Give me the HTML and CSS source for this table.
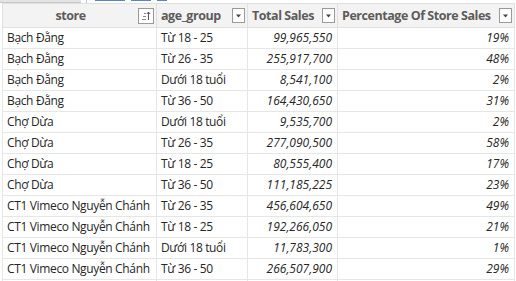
FILE: index.html
```html
<!DOCTYPE html>
<html>
<head>
<meta charset="utf-8">
<link rel="stylesheet" href="styles.css">
</head>
<body>
<div class="topstrip">
  <div class="tabbar"></div>
  <div class="tablink"><span class="frag"></span><span class="frag f2"></span><span class="frag f3"></span></div>
</div>
<table class="grid">
  <colgroup>
    <col class="c1"><col class="c2"><col class="c3"><col class="c4">
  </colgroup>
  <thead>
    <tr>
      <th class="center"><span class="hl">store</span><span class="ico sort"><svg width="16" height="16" viewBox="0 0 16 16"><rect x="0.5" y="0.5" width="15" height="15" fill="#fff" stroke="#9a9a9a"/><path d="M6 5.5h2M5 8.5h3M4 11.5h4" stroke="#8a8a8a" stroke-width="1"/><path d="M10.5 12V4M8.8 6l1.7-2 1.7 2" stroke="#555" fill="none" stroke-width="1"/></svg></span></th>
      <th><span class="hl">age_group</span><span class="ico dd"><svg width="13" height="15" viewBox="0 0 13 15"><rect x="0.5" y="0.5" width="12" height="14" fill="#fff" stroke="#9a9a9a"/><path d="M4 6.5h5l-2.5 3z" fill="#444"/></svg></span></th>
      <th><span class="hl">Total Sales</span><span class="ico dd"><svg width="13" height="15" viewBox="0 0 13 15"><rect x="0.5" y="0.5" width="12" height="14" fill="#fff" stroke="#9a9a9a"/><path d="M4 6.5h5l-2.5 3z" fill="#444"/></svg></span></th>
      <th><span class="hl">Percentage Of Store Sales</span><span class="ico dd"><svg width="13" height="15" viewBox="0 0 13 15"><rect x="0.5" y="0.5" width="12" height="14" fill="#fff" stroke="#9a9a9a"/><path d="M4 6.5h5l-2.5 3z" fill="#444"/></svg></span></th>
    </tr>
  </thead>
  <tbody>
    <tr><td>Bạch Đằng</td><td>Từ 18 - 25</td><td class="num">99,965,550</td><td class="num">19%</td></tr>
    <tr><td>Bạch Đằng</td><td>Từ 26 - 35</td><td class="num">255,917,700</td><td class="num">48%</td></tr>
    <tr><td>Bạch Đằng</td><td>Dưới 18 tuổi</td><td class="num">8,541,100</td><td class="num">2%</td></tr>
    <tr><td>Bạch Đằng</td><td>Từ 36 - 50</td><td class="num">164,430,650</td><td class="num">31%</td></tr>
    <tr><td>Chợ Dừa</td><td>Dưới 18 tuổi</td><td class="num">9,535,700</td><td class="num">2%</td></tr>
    <tr><td>Chợ Dừa</td><td>Từ 26 - 35</td><td class="num">277,090,500</td><td class="num">58%</td></tr>
    <tr><td>Chợ Dừa</td><td>Từ 18 - 25</td><td class="num">80,555,400</td><td class="num">17%</td></tr>
    <tr><td>Chợ Dừa</td><td>Từ 36 - 50</td><td class="num">111,185,225</td><td class="num">23%</td></tr>
    <tr><td>CT1 Vimeco Nguyễn Chánh</td><td>Từ 26 - 35</td><td class="num">456,604,650</td><td class="num">49%</td></tr>
    <tr><td>CT1 Vimeco Nguyễn Chánh</td><td>Từ 18 - 25</td><td class="num">192,266,050</td><td class="num">21%</td></tr>
    <tr><td>CT1 Vimeco Nguyễn Chánh</td><td>Dưới 18 tuổi</td><td class="num">11,783,300</td><td class="num">1%</td></tr>
    <tr><td>CT1 Vimeco Nguyễn Chánh</td><td>Từ 36 - 50</td><td class="num">266,507,900</td><td class="num">29%</td></tr>
    <tr><td>&nbsp;</td><td></td><td class="num"></td><td class="num"></td></tr>
  </tbody>
</table>
</body>
</html>
```
FILE: styles.css
```css
html, body {
  margin: 0;
  padding: 0;
  background: #ffffff;
  overflow: hidden;
}
body {
  font-family: "Open Sans", "Noto Sans", sans-serif;
  color: #252423;
}
.topstrip {
  height: 3px;
  display: flex;
  gap: 5px;
  overflow: hidden;
}
.tabbar {
  width: 81px;
  height: 2px;
  background: #e3e3e3;
  border-bottom: 1px solid #c8c8c8;
}
.tablink {
  width: 90px;
  height: 3px;
  border-left: 1px solid #b9c6dc;
  display: flex;
  gap: 6px;
  padding-left: 8px;
}
.frag {
  width: 30px;
  height: 1px;
  background: #5a83c9;
}
.f2 { width: 20px; }
.f3 { width: 10px; }
.grid {
  border-collapse: collapse;
  table-layout: fixed;
  margin-left: 2px;
  width: 512px;
}
.c1 { width: 154px; }
.c2 { width: 91px; }
.c3 { width: 90px; }
.c4 { width: 177px; }
th {
  height: 23px;
  padding: 0 0 0 4px;
  background: #f3f3f3;
  border: 1px solid #e0e0e0;
  text-align: left;
  font-weight: 700;
  font-size: 12.5px;
  letter-spacing: -0.45px;
  color: #5d5c5b;
  position: relative;
  white-space: nowrap;
  line-height: 23px;
}
th.center {
  text-align: center;
  padding: 0 18px 0 0;
}
.ico {
  position: absolute;
  top: 4px;
  right: 2px;
  height: 15px;
  display: flex;
}
.ico.sort {
  top: 4px;
  right: 2px;
  height: 16px;
}
td {
  height: 20px;
  padding: 0 0 0 4px;
  border: 1px solid #e6e6e6;
  border-top: none;
  font-size: 12px;
  letter-spacing: -0.35px;
  line-height: 20px;
  white-space: nowrap;
  overflow: hidden;
  color: #262626;
}
td.num {
  text-align: right;
  font-style: italic;
  letter-spacing: 0;
  padding: 0 5px 0 0;
  color: #262626;
}
```
